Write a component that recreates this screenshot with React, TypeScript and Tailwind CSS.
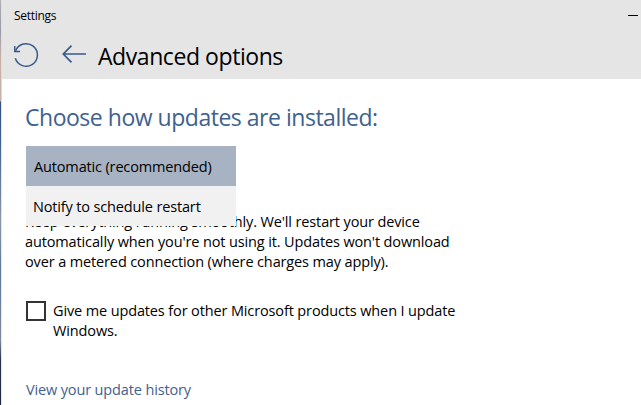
import { useState } from "react";
import clsx from "clsx";

const options = ["Automatic (recommended)", "Notify to schedule restart"];

function RestartIcon() {
  return (
    <svg width="26" height="26" viewBox="0 0 26 26" fill="none" stroke="#38598c" strokeWidth="1.5">
      <path d="M1.6 8.8A11.3 11.3 0 1 1 1.3 16.3" />
      <path d="M0.7 4V9.4H6" />
    </svg>
  );
}

function BackIcon() {
  return (
    <svg width="25" height="20" viewBox="0 0 25 20" fill="none" stroke="#38598c" strokeWidth="1.7">
      <path d="M1.3 10H24M9.5 1.7L1.3 10L9.5 18.3" />
    </svg>
  );
}

function Header() {
  return (
    <header className="h-[79px] shrink-0 bg-[#e5e5e5]">
      <div className="flex h-[31px] items-center justify-between pl-3">
        <span className="text-[12px] leading-[30px] tracking-[-0.3px]">Settings</span>
        <button className="mr-[3px] h-px w-[10px] bg-black" aria-label="Minimize" />
      </div>
      <div className="flex h-[48px] items-start pl-3">
        <button className="mt-[11px]" aria-label="Restart">
          <RestartIcon />
        </button>
        <button className="mt-[13px] ml-[22px]" aria-label="Back">
          <BackIcon />
        </button>
        <h1 className="mt-[9px] ml-[11px] text-[23px] leading-[32px] tracking-[-0.43px] whitespace-nowrap">
          Advanced options
        </h1>
      </div>
    </header>
  );
}

function InstallSelect() {
  const [selected, setSelected] = useState(0);

  return (
    <ul className="absolute top-0 left-px w-[210px]">
      {options.map((option, i) => (
        <li
          key={option}
          onClick={() => setSelected(i)}
          className={clsx(
            "h-10 text-[14.5px] leading-[41px] tracking-[-0.15px] whitespace-nowrap",
            i === selected ? "bg-[#a7b2c3] pl-2" : "bg-[#f1f1f1] pl-[7px]"
          )}
        >
          {option}
        </li>
      ))}
    </ul>
  );
}

export default function App() {
  return (
    <div className="flex h-[405px] w-[641px] overflow-hidden bg-white font-['Open_Sans','Noto_Sans',sans-serif] text-black">
      <div className="w-px shrink-0 bg-[linear-gradient(#b0b0b8_0px,#9a9aaa_30px,#c9b3a5_60px,#c4b0a6_101px,#35507f_102px,#41608f_140px,#8998a8_222px,#5c779b_270px,#7f8c9e_340px,#26334f_360px,#1d2a48_405px)]" />
      <div className="w-px shrink-0 bg-[linear-gradient(#e2e2e4_0px,#e2d8d0_101px,#dfe4ec_102px,#e4e8ee_405px)]" />
      <div className="flex min-w-0 flex-1 flex-col">
        <Header />
        <main className="pl-[23px]">
          <h2 className="mt-[21px] text-[23px] leading-[34px] tracking-[-0.48px] whitespace-nowrap text-[#41618f]">
            Choose how updates are installed:
          </h2>
          <div className="relative mt-[12px] pt-[66px]">
            <p className="text-[14.5px] leading-5 tracking-[-0.13px] whitespace-nowrap">
              Keep everything running smoothly. We'll restart your device
              <br />
              automatically when you're not using it. Updates won't download
              <br />
              over a metered connection (where charges may apply).
            </p>
            <InstallSelect />
          </div>
          <label className="mt-[29px] flex">
            <span className="ml-px h-5 w-5 shrink-0 border-2 border-[#333]" />
            <span className="ml-[7px] text-[14.5px] leading-5 tracking-[-0.13px] whitespace-nowrap">
              Give me updates for other Microsoft products when I update
              <br />
              Windows.
            </span>
          </label>
          <a className="mt-[39px] ml-px block text-[14.5px] leading-5 tracking-[-0.14px] text-[#41618f]">
            View your update history
          </a>
        </main>
      </div>
    </div>
  );
}
